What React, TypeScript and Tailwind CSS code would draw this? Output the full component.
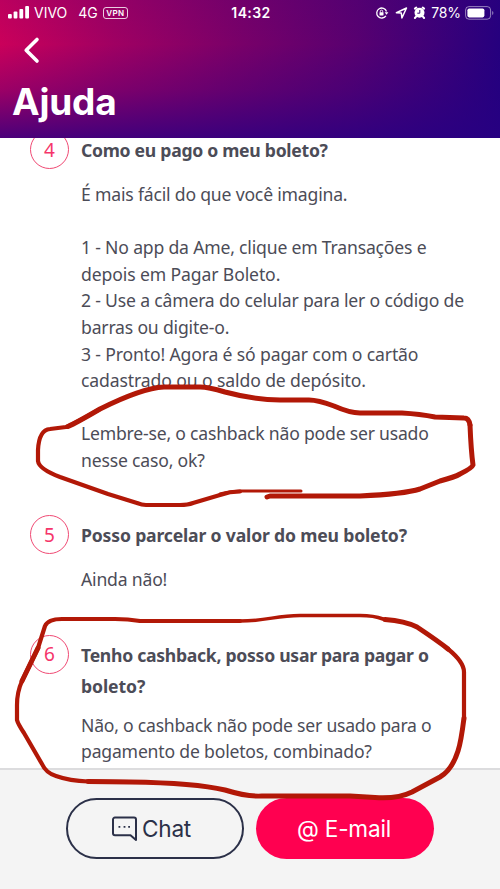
import type { JSX } from 'react';

interface Line {
  readonly text: string;
  readonly className?: string;
}

interface Question {
  readonly number: number;
  readonly title: Line[];
  readonly answer: Line[];
  readonly answerGap: string;
}

const QUESTIONS: Question[] = [
  {
    number: 4,
    title: [{ text: 'Como eu pago o meu boleto?', className: 'tracking-[-0.28px]' }],
    answerGap: 'mt-[15px]',
    answer: [
      { text: 'É mais fácil do que você imagina.' },
      { text: '' },
      { text: '1 - No app da Ame, clique em Transações e' },
      { text: 'depois em Pagar Boleto.', className: 'tracking-[-0.12px]' },
      { text: '2 - Use a câmera do celular para ler o código de' },
      { text: 'barras ou digite-o.' },
      { text: '3 - Pronto! Agora é só pagar com o cartão', className: 'tracking-[-0.15px]' },
      { text: 'cadastrado ou o saldo de depósito.', className: 'tracking-[-0.12px]' },
      { text: '' },
      { text: 'Lembre-se, o cashback não pode ser usado', className: 'tracking-[-0.21px]' },
      { text: 'nesse caso, ok?' },
    ],
  },
  {
    number: 5,
    title: [{ text: 'Posso parcelar o valor do meu boleto?', className: 'tracking-[-0.17px]' }],
    answerGap: 'mt-[15px]',
    answer: [{ text: 'Ainda não!' }],
  },
  {
    number: 6,
    title: [
      { text: 'Tenho cashback, posso usar para pagar o', className: 'tracking-[-0.28px]' },
      { text: 'boleto?', className: 'tracking-[-0.1px]' },
    ],
    answerGap: 'mt-[10px]',
    answer: [
      { text: 'Não, o cashback não pode ser usado para o', className: 'tracking-[-0.23px]' },
      { text: 'pagamento de boletos, combinado?' },
    ],
  },
];

function StatusBar(): JSX.Element {
  return (
    <div className="grid h-[25px] grid-cols-[1fr_auto_1fr] items-center pr-[6px] pl-2 text-[14px] leading-none">
      <div className="flex items-center">
        <svg width="21" height="13" viewBox="0 0 21 13" fill="currentColor">
          <rect x="0" y="8" width="3.8" height="4.5" rx="1" />
          <rect x="5.6" y="5.5" width="3.8" height="7" rx="1" />
          <rect x="11.4" y="3" width="3.8" height="9.5" rx="1" />
          <rect x="17.2" y="0" width="3.8" height="12.5" rx="1" />
        </svg>
        <span className="ml-[5px]">VIVO</span>
        <span className="ml-[11px]">4G</span>
        <span className="ml-[5px] flex h-[12px] w-[25px] items-center justify-center rounded-[3px] border border-white/80 text-[8px] font-semibold tracking-[0.4px]">
          VPN
        </span>
      </div>
      <span className="font-semibold tracking-[0.4px]">14:32</span>
      <div className="flex items-center justify-end">
        <svg className="mr-[-2px]" width="13" height="12" viewBox="0 0 13 12" fill="none" stroke="currentColor" strokeWidth="1.3" overflow="visible">
          <g transform="translate(1.500 0)">
            <path d="M10.4 8.8A5 5 0 1 1 11 4.5" />
            <path d="M9.1 5.2h3.8L11 7.7Z" fill="currentColor" stroke="none" />
            <rect x="4" y="5.3" width="4" height="3.2" rx=".4" fill="currentColor" stroke="none" />
            <path d="M4.8 5.5V4.3a1.2 1.2 0 0 1 2.4 0v1.2" strokeWidth=".9" />
          </g>
        </svg>
        <svg className="ml-[9px]" width="12" height="12" viewBox="0 0 12 12" fill="none" stroke="currentColor" strokeWidth="1.5" strokeLinejoin="round" overflow="visible">
          <path transform="translate(1.500 0)" d="M.9 5.8 11 1 6.4 11 5.8 6Z" />
        </svg>
        <svg className="ml-[7px]" width="12" height="13" viewBox="0 0 12 13" overflow="visible">
          <circle cx="6.5" cy="6.8" r="5" fill="currentColor" />
          <path d="M1.9 2.6 3.3 1.5M11.1 2.6 9.7 1.5M3.1 10.6 1.9 12M9.9 10.6l1.2 1.4" stroke="currentColor" strokeWidth="2" strokeLinecap="round" />
          <path d="M6.8 4v3.2H4.3" stroke="#35007c" strokeWidth="1" fill="none" />
        </svg>
        <span className="ml-[6px] tracking-[-0.1px]">78%</span>
        <svg className="ml-[4px]" width="29" height="14" viewBox="0 0 29 14" fill="none">
          <rect x=".6" y=".6" width="25" height="12.6" rx="3.4" stroke="white" strokeOpacity=".5" />
          <rect x="2.4" y="2.4" width="17" height="9" rx="1.8" fill="white" />
          <path d="M27.2 5v4c1.6-.7 1.6-3.3 0-4Z" fill="white" fillOpacity=".5" />
        </svg>
      </div>
    </div>
  );
}

function Header(): JSX.Element {
  return (
    <header className="h-[138px] bg-[linear-gradient(to_bottom,rgba(40,0,130,0.1)_0%,rgba(40,0,130,0)_32%,rgba(40,0,130,0.28)_65%,rgba(40,0,130,0.78)_100%),linear-gradient(96deg,#cc005a_0%,#a00062_23%,#780069_48%,#580070_70%,#380079_88%,#22007f_100%)] font-[Inter,sans-serif] text-white">
      <StatusBar />
      <button type="button" aria-label="Voltar" className="mt-[11px] ml-[23px] block">
        <svg width="18" height="28" viewBox="0 0 18 28" fill="none" stroke="currentColor" strokeWidth="3.6" strokeLinecap="round" strokeLinejoin="round">
          <path d="M14 3.5 3.2 14.2 14 25" />
        </svg>
      </button>
      <h1 className="mt-[15px] ml-[12px] text-[37px] leading-[45px] font-bold tracking-[-0.2px]">Ajuda</h1>
    </header>
  );
}

function QuestionItem({ question }: { readonly question: Question }): JSX.Element {
  return (
    <li className="flex items-start">
      <span className="flex h-[39px] w-[39px] shrink-0 items-center justify-center rounded-full border border-[#f04a74] pt-px text-[19px] text-[#f5356a]">
        {question.number}
      </span>
      <div className="ml-3 pt-[5px] whitespace-nowrap">
        <h2 className="text-[17.6px] leading-[31px] font-bold">
          {question.title.map((line) => (
            <span key={line.text} className="block">
              <span className={line.className}>{line.text}</span>
            </span>
          ))}
        </h2>
        <p className={`text-[17.6px] leading-[26.6px] tracking-[-0.19px] ${question.answerGap}`}>
          {question.answer.map((line, i) => (
            <span key={i} className="block h-[26.6px]">
              <span className={line.className}>{line.text}</span>
            </span>
          ))}
        </p>
      </div>
    </li>
  );
}

function Footer(): JSX.Element {
  return (
    <footer className="flex h-[121px] shrink-0 justify-center gap-[12px] border-t-2 border-[#dcdcde] bg-[#f4f4f4] pt-[28px] font-[Inter,sans-serif] text-[22.6px]">
      <button type="button" className="flex h-[61px] w-[178px] items-center justify-center gap-[5px] rounded-full border-2 border-[#2b3048] pt-px pr-[7px] text-[#2b3048]">
        <svg width="25" height="26" viewBox="0 0 25 26" fill="none" stroke="currentColor" strokeWidth="2" strokeLinejoin="round">
          <path d="M3 1.5h19a2 2 0 0 1 2 2V24l-5.5-4.8H3a2 2 0 0 1-2-2V3.5a2 2 0 0 1 2-2Z" />
          <path d="M6.5 10.8h1.8M11.6 10.8h1.8M16.2 10.8H18" strokeWidth="1.7" />
        </svg>
        <span className="tracking-[-0.2px]">Chat</span>
      </button>
      <button type="button" className="h-[61px] w-[178px] rounded-full bg-[#ff0050] pt-px pr-[2px] tracking-[-0.2px] text-white">
        @ E-mail
      </button>
    </footer>
  );
}

// Freehand marker rings drawn over the answers
function MarkerRings(): JSX.Element {
  return (
    <svg className="pointer-events-none absolute inset-0" width="500" height="889" viewBox="0 0 500 889" fill="none" stroke="#b21807" strokeLinecap="round" strokeLinejoin="round">
      <path strokeWidth="3" d="M301 491H240Q231 491 220 494" />
      <path strokeWidth="4.2" d="M240 491.5Q230 491.5 220 495L193 503Q188 505 180 505H146Q142 505 137 503L108 494 60 477Q39 469 38 461V450Q39 430 50 429L66 427Q74 424 100 409" />
      <path strokeWidth="5" d="M68 426.5Q76 423 100 409 142 388 164 387H200Q208 387 225 392 255 400 280 400H309Q318 400 334 406 350 413 360 413H402Q420 414 435 417L464 418Q469 418 470 425" />
      <path strokeWidth="5" d="M470 425Q471 450 473 465 472 468 460 474 455 477 440 481L420 489Q404 494 360 496H270L267 497" />
      <path strokeWidth="3.5" d="M383 619Q374 615.5 360 615.5H300C275 615.5 268 621 240 621H140" />
      <path strokeWidth="4.2" d="M240 621H140Q128 619 115 619H62Q48 619 45 626L38 648 22 681Q17 692 17 705V720Q18 724 24 733L42 764Q46 773 56 776 70 781 88 781.5L130 782" />
      <path strokeWidth="5" d="M38 648 22 681M88 781.5 130 782Q195 783 225 790 248 797 262 796H350L375 797.5Q398 799 412 792L440 777Q452 770 458 751 461 742 464 718" />
      <path strokeWidth="4.2" d="M464 720V672Q464 662 448 649" />
      <path strokeWidth="5" d="M385 619.5Q405 621 417 627 438 641 448 649" />
    </svg>
  );
}

export default function App(): JSX.Element {
  return (
    <div className="relative flex h-[889px] w-[500px] flex-col overflow-hidden bg-white font-['Noto_Sans',sans-serif] text-[#4c4c57]">
      <Header />
      <main className="min-h-0 flex-1 overflow-hidden">
        <ul className="-mt-[8px] space-y-[41.8px] pl-[30px]">
          {QUESTIONS.map((q) => (
            <QuestionItem key={q.number} question={q} />
          ))}
        </ul>
      </main>
      <Footer />
      <MarkerRings />
    </div>
  );
}
